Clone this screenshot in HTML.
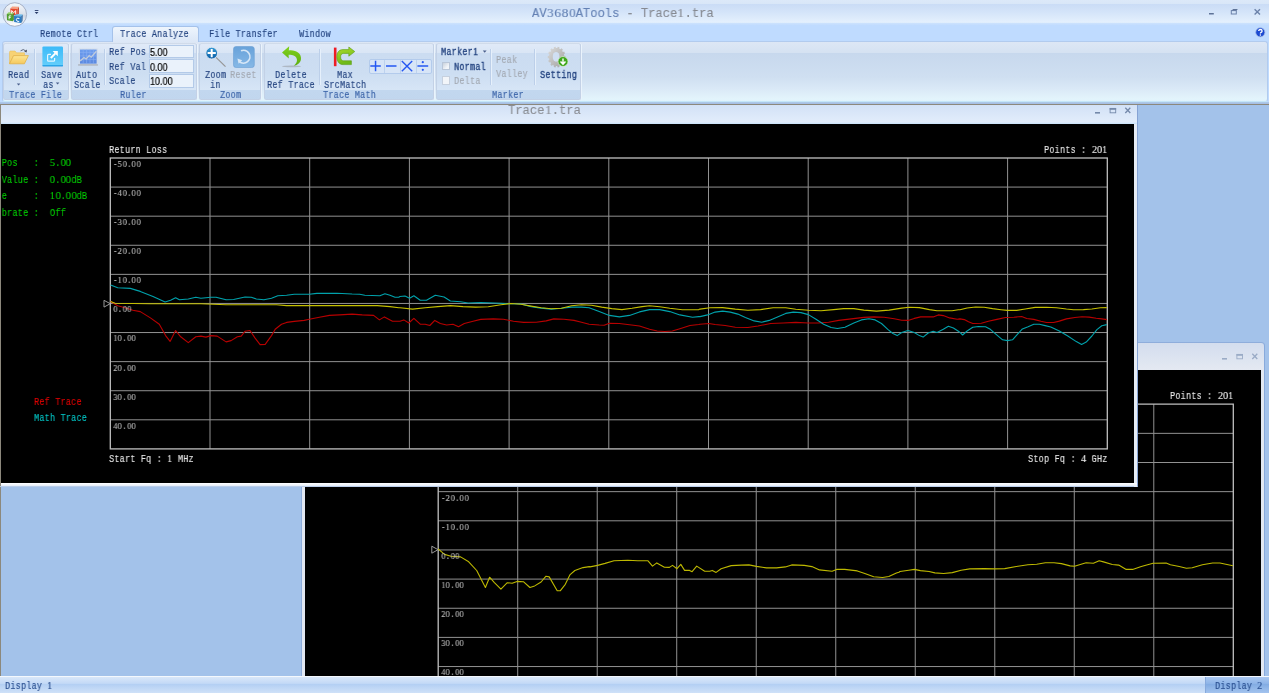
<!DOCTYPE html><html><head><meta charset="utf-8"><title>AV3680ATools</title><style>*{margin:0;padding:0;box-sizing:border-box}
html,body{width:1269px;height:693px;overflow:hidden;background:#a3c2ea}
div,span,svg{position:absolute}
.x{white-space:pre;line-height:1;transform-origin:0 0;display:block;will-change:transform}
.m{font-family:"Liberation Mono",sans-serif;font-size:10.5px;font-weight:normal;transform:scaleX(0.8397)}
.m b{transform:scaleX(1.1909)}
.mb{font-family:"Liberation Mono",sans-serif;font-size:10.5px;font-weight:normal;transform:scaleX(0.8397)}
.mb b{transform:scaleX(1.1909)}
.s{font-family:"Liberation Mono",sans-serif;font-size:8.9px;font-weight:normal;transform:scaleX(0.8689)}
.s b{transform:scaleX(1.0703);font-size:10.5px;width:5.340px}
.t{font-family:"Liberation Mono",sans-serif;font-size:13.2px;font-weight:normal;transform:scaleX(0.9205)}
.t b{transform:scaleX(1.0864)}
.e{font-family:"Liberation Sans",sans-serif;font-size:10.0px;font-weight:normal;transform:scaleX(0.9000)}
.x b{display:inline-block;width:0.6em;text-align:center;font-family:"Liberation Serif",serif;font-weight:normal;line-height:0;font-size:1.02em;width:0.5882em}
.m,.s,.t{-webkit-text-stroke:0.12px currentColor}
.mb{-webkit-text-stroke:0.3px currentColor}
.k{-webkit-text-stroke:0.1px currentColor}</style></head><body>
<div style="left:0px;top:104px;width:1269px;height:573px;background:#a3c2ea"></div>
<div style="left:0px;top:104px;width:1.4px;height:573px;background:#8c887c"></div>
<div id="w2" style="left:300.6px;top:341.8px;width:964.6px;height:340px;background:linear-gradient(#d3ddee,#e4e9f2 27px,#e2e8f2 28px);border-radius:4px 4px 0 0;border:1px solid #8eaddb;border-right:1.5px solid #88aadc"></div>
<div style="left:304.5px;top:369.6px;width:956px;height:306.4px;background:#000"></div>
<svg style="left:1220.5px;top:352.7px" width="45" height="10" viewBox="0 0 45 10"><rect x="1" y="5" width="5" height="1.6" fill="#9aabc6"/><rect x="15.9" y="1.4" width="5.6" height="4.4" fill="none" stroke="#9aabc6" stroke-width="0.9"/><rect x="15.5" y="1" width="6.4" height="1.8" fill="#9aabc6"/><path d="M31.3 0.8 l5 5.2 M36.3 0.8 l-5 5.2" stroke="#9aabc6" stroke-width="1.3" fill="none"/></svg>
<svg style="left:0;top:0" width="1269" height="693" viewBox="0 0 1269 693" shape-rendering="geometricPrecision"><line x1="517.71" y1="404.2" x2="517.71" y2="676.00" stroke="#929292" stroke-width="1"/><line x1="597.22" y1="404.2" x2="597.22" y2="676.00" stroke="#929292" stroke-width="1"/><line x1="676.73" y1="404.2" x2="676.73" y2="676.00" stroke="#929292" stroke-width="1"/><line x1="756.24" y1="404.2" x2="756.24" y2="676.00" stroke="#929292" stroke-width="1"/><line x1="835.75" y1="404.2" x2="835.75" y2="676.00" stroke="#929292" stroke-width="1"/><line x1="915.26" y1="404.2" x2="915.26" y2="676.00" stroke="#929292" stroke-width="1"/><line x1="994.77" y1="404.2" x2="994.77" y2="676.00" stroke="#929292" stroke-width="1"/><line x1="1074.28" y1="404.2" x2="1074.28" y2="676.00" stroke="#929292" stroke-width="1"/><line x1="1153.79" y1="404.2" x2="1153.79" y2="676.00" stroke="#929292" stroke-width="1"/><line x1="438.2" y1="433.35" x2="1233.3" y2="433.35" stroke="#929292" stroke-width="1"/><line x1="438.2" y1="462.50" x2="1233.3" y2="462.50" stroke="#929292" stroke-width="1"/><line x1="438.2" y1="491.65" x2="1233.3" y2="491.65" stroke="#929292" stroke-width="1"/><line x1="438.2" y1="520.80" x2="1233.3" y2="520.80" stroke="#929292" stroke-width="1"/><line x1="438.2" y1="549.95" x2="1233.3" y2="549.95" stroke="#929292" stroke-width="1"/><line x1="438.2" y1="579.10" x2="1233.3" y2="579.10" stroke="#929292" stroke-width="1"/><line x1="438.2" y1="608.25" x2="1233.3" y2="608.25" stroke="#929292" stroke-width="1"/><line x1="438.2" y1="637.40" x2="1233.3" y2="637.40" stroke="#929292" stroke-width="1"/><line x1="438.2" y1="666.55" x2="1233.3" y2="666.55" stroke="#929292" stroke-width="1"/><path d="M438.2 676 V404.2 H1233.3 V676" fill="none" stroke="#c0c0c0" stroke-width="1.3"/><polyline fill="none" stroke="#bdb800" stroke-width="1.1" stroke-linejoin="round" points="438.1,548.9 444.5,554.4 451.0,556.3 460.6,556.9 468.7,561.8 476.7,570.5 485.4,587.5 489.6,577.2 494.4,582.7 500.9,589.1 507.3,582.7 512.2,583.3 517.0,581.4 523.4,581.7 529.9,587.5 534.7,585.9 541.1,582.0 546.0,576.2 549.2,576.9 557.2,590.7 560.4,590.7 565.3,584.3 570.1,574.6 574.9,570.5 583.0,567.6 589.4,566.6 590.0,566.9 597.6,565.4 605.1,563.4 614.0,560.8 627.8,560.3 637.9,560.8 648.0,560.8 652.5,566.1 656.8,562.9 664.4,567.2 669.4,567.4 672.5,565.4 677.0,568.7 680.8,564.4 684.6,570.4 689.6,570.4 692.1,571.7 696.7,566.1 704.7,571.2 709.8,571.2 712.3,570.4 716.1,572.4 721.1,568.7 731.2,565.6 741.3,565.1 748.9,564.9 756.4,566.4 766.5,567.9 776.6,567.9 785.4,566.9 791.7,564.9 804.3,565.4 811.9,566.6 819.5,569.9 832.1,571.2 836.6,569.4 844.7,569.4 857.3,570.9 864.8,573.5 873.7,576.7 882.5,577.5 888.8,576.5 896.4,573.0 898.9,572.2 900.0,571.5 908.7,570.3 914.5,569.4 920.4,570.6 929.1,571.5 934.9,572.9 943.6,573.5 952.3,572.6 961.1,570.3 969.8,568.9 984.3,568.6 994.5,568.9 1004.7,568.6 1016.3,566.5 1027.9,564.8 1036.7,564.2 1045.4,562.7 1054.1,562.7 1061.4,563.6 1070.1,565.9 1074.5,566.2 1080.3,564.5 1086.1,562.7 1093.4,563.3 1099.2,560.7 1103.5,561.9 1112.3,564.5 1118.7,565.1 1126.2,569.4 1132.6,569.4 1141.3,566.5 1153.0,563.3 1166.1,563.0 1170.4,564.8 1179.2,566.5 1186.4,568.3 1192.2,567.7 1202.4,564.8 1212.6,563.0 1219.9,563.0 1232.9,565.7"/><path d="M431.8 546.2 L438 549.7 L431.8 553.2 Z" fill="none" stroke="#9a9a9a" stroke-width="1"/></svg>
<span class="x s" style="left:440.88px;top:495px;color:#b8b8b8;">-<b>2</b><b>0</b>.<b>0</b><b>0</b></span>
<span class="x s" style="left:440.88px;top:524px;color:#b8b8b8;">-<b>1</b><b>0</b>.<b>0</b><b>0</b></span>
<span class="x s" style="left:440.88px;top:553px;color:#b8b8b8;"><b>0</b>.<b>0</b><b>0</b></span>
<span class="x s" style="left:440.88px;top:582px;color:#b8b8b8;"><b>1</b><b>0</b>.<b>0</b><b>0</b></span>
<span class="x s" style="left:440.88px;top:611px;color:#b8b8b8;"><b>2</b><b>0</b>.<b>0</b><b>0</b></span>
<span class="x s" style="left:440.88px;top:640px;color:#b8b8b8;"><b>3</b><b>0</b>.<b>0</b><b>0</b></span>
<span class="x s" style="left:440.88px;top:669px;color:#b8b8b8;"><b>4</b><b>0</b>.<b>0</b><b>0</b></span>
<span class="x m k" style="left:1170.09px;top:391px;color:#e8e8e8;">Points : <b>2</b><b>0</b><b>1</b></span>
<div id="w1" style="left:0;top:104px;width:1138px;height:383px;background:linear-gradient(#d2e1f6,#e2edfb 17px,#cfe6fb 18.5px,#cfe6fb 19.5px,#e8eef6 19.5px);border-top:1px solid #8c887c;border-right:1px solid #86a3d4;border-bottom:1px solid #b9cdea"></div>
<div style="left:1133.8px;top:124px;width:3.2px;height:362.5px;background:#e6ecf5"></div>
<div style="left:0px;top:482.6px;width:1137px;height:3.9px;background:linear-gradient(#fff,#e4ecf8)"></div>
<div style="left:0px;top:105px;width:1.4px;height:381px;background:#8c887c"></div>
<div style="left:1.4px;top:123.8px;width:1132.4px;height:358.8px;background:#000"></div>
<span class="x t" style="left:508.43px;top:104px;color:#8a8d93;">Trace<b>1</b>.tra</span>
<svg style="left:1094px;top:107.1px" width="45" height="10" viewBox="0 0 45 10"><rect x="1" y="5" width="5" height="1.6" fill="#7489aa"/><rect x="16.100000000000044" y="1.4" width="5.6" height="4.4" fill="none" stroke="#7489aa" stroke-width="0.9"/><rect x="15.700000000000045" y="1" width="6.4" height="1.8" fill="#7489aa"/><path d="M31.3 0.8 l5 5.2 M36.3 0.8 l-5 5.2" stroke="#7489aa" stroke-width="1.3" fill="none"/></svg>
<svg style="left:0;top:0" width="1269" height="693" viewBox="0 0 1269 693" shape-rendering="geometricPrecision"><line x1="210.00" y1="158" x2="210.00" y2="448.90" stroke="#929292" stroke-width="1"/><line x1="309.70" y1="158" x2="309.70" y2="448.90" stroke="#929292" stroke-width="1"/><line x1="409.40" y1="158" x2="409.40" y2="448.90" stroke="#929292" stroke-width="1"/><line x1="509.10" y1="158" x2="509.10" y2="448.90" stroke="#929292" stroke-width="1"/><line x1="608.80" y1="158" x2="608.80" y2="448.90" stroke="#929292" stroke-width="1"/><line x1="708.50" y1="158" x2="708.50" y2="448.90" stroke="#929292" stroke-width="1"/><line x1="808.20" y1="158" x2="808.20" y2="448.90" stroke="#929292" stroke-width="1"/><line x1="907.90" y1="158" x2="907.90" y2="448.90" stroke="#929292" stroke-width="1"/><line x1="1007.60" y1="158" x2="1007.60" y2="448.90" stroke="#929292" stroke-width="1"/><line x1="110.3" y1="187.09" x2="1107.3" y2="187.09" stroke="#929292" stroke-width="1"/><line x1="110.3" y1="216.18" x2="1107.3" y2="216.18" stroke="#929292" stroke-width="1"/><line x1="110.3" y1="245.27" x2="1107.3" y2="245.27" stroke="#929292" stroke-width="1"/><line x1="110.3" y1="274.36" x2="1107.3" y2="274.36" stroke="#929292" stroke-width="1"/><line x1="110.3" y1="303.45" x2="1107.3" y2="303.45" stroke="#929292" stroke-width="1"/><line x1="110.3" y1="332.54" x2="1107.3" y2="332.54" stroke="#929292" stroke-width="1"/><line x1="110.3" y1="361.63" x2="1107.3" y2="361.63" stroke="#929292" stroke-width="1"/><line x1="110.3" y1="390.72" x2="1107.3" y2="390.72" stroke="#929292" stroke-width="1"/><line x1="110.3" y1="419.81" x2="1107.3" y2="419.81" stroke="#929292" stroke-width="1"/><rect x="110.3" y="158" width="997" height="290.9" fill="none" stroke="#c0c0c0" stroke-width="1.3"/><polyline fill="none" stroke="#b80000" stroke-width="1.1" stroke-linejoin="round" points="110.6,301.5 117.7,305.8 125.2,307.8 132.8,310.3 140.3,311.6 150.4,317.9 159.3,324.2 165.6,335.6 170.1,341.4 175.6,330.5 180.7,336.8 188.3,342.6 195.8,336.8 200.9,336.1 205.9,337.1 210.9,335.6 217.2,336.1 226.1,341.9 231.1,340.6 237.4,336.8 241.2,336.1 245.0,331.3 250.0,330.5 255.1,338.1 260.1,344.6 265.2,344.4 271.5,335.6 275.2,329.3 281.5,324.2 286.6,322.4 294.2,321.4 304.2,320.4 309.3,319.2 319.4,317.2 329.5,315.4 339.5,314.9 352.1,314.1 362.2,314.9 373.6,315.4 379.4,319.9 384.4,316.9 392.5,321.2 398.8,321.2 400.0,321.2 403.8,319.9 408.8,323.0 413.9,318.4 420.2,324.2 425.2,324.2 429.8,325.5 434.8,320.4 440.3,323.5 446.6,325.0 453.0,324.2 458.5,326.7 464.3,323.5 473.1,321.2 480.7,319.4 493.3,318.9 503.4,319.2 513.5,321.2 523.6,322.4 536.2,322.2 546.2,320.9 553.8,318.9 563.9,319.2 574.0,320.4 581.5,322.2 589.1,324.2 599.2,325.0 604.2,325.2 609.3,323.2 619.4,323.5 629.5,324.7 639.5,326.0 649.6,329.3 657.2,331.0 664.8,331.5 672.3,331.0 679.9,328.7 690.0,325.5 698.8,324.5 700.0,324.2 708.8,323.5 715.1,324.5 725.2,325.5 735.3,327.2 747.9,327.5 758.0,326.0 770.6,323.5 783.2,323.0 795.8,322.4 808.4,323.0 818.5,323.0 828.6,322.2 838.7,320.4 851.3,318.9 863.9,317.4 874.0,316.9 884.1,317.2 894.2,318.7 901.7,320.2 908.0,320.4 914.3,318.4 920.6,316.9 926.9,316.9 933.2,316.9 938.3,314.9 943.3,315.6 949.6,317.9 957.2,319.2 960.0,318.9 964.3,319.6 968.5,321.8 972.8,323.5 981.3,323.2 988.4,321.3 996.9,319.4 1005.4,317.5 1013.9,317.2 1021.7,316.5 1026.7,318.5 1033.8,319.4 1040.9,321.3 1046.5,322.5 1053.6,322.5 1059.3,321.1 1066.4,318.9 1074.9,317.5 1082.0,316.8 1089.1,317.1 1096.2,318.2 1101.8,318.9 1106.8,319.6"/><polyline fill="none" stroke="#00a2ac" stroke-width="1.1" stroke-linejoin="round" points="110.6,285.1 117.7,287.7 130.3,288.4 140.3,291.4 153.0,296.5 165.1,302.0 170.6,300.3 175.6,297.7 179.4,299.8 188.3,299.0 195.8,297.2 200.9,298.2 210.9,297.2 216.0,297.2 226.1,299.8 233.6,299.5 245.0,297.0 251.3,297.2 256.3,299.0 263.9,299.8 271.5,298.2 277.8,295.7 286.6,295.2 294.2,294.2 309.3,294.2 316.8,293.4 337.0,293.2 352.1,294.0 359.7,294.2 364.8,295.2 379.9,295.7 384.9,293.7 390.0,295.2 395.0,297.2 398.8,297.2 400.0,296.5 405.0,296.0 409.6,298.2 413.9,295.7 420.2,300.3 426.5,300.3 435.3,295.2 444.1,297.0 450.4,301.0 460.5,301.8 468.1,303.0 480.7,302.5 500.9,303.3 510.9,303.8 521.0,304.0 531.1,306.6 541.2,308.1 551.3,309.1 561.4,308.3 571.5,307.1 581.5,307.1 589.1,307.8 599.2,311.6 609.3,315.4 619.4,316.9 629.5,315.4 639.5,311.9 649.6,309.6 659.7,309.6 669.8,311.6 679.9,314.9 692.5,317.2 698.8,316.6 700.0,316.6 707.6,314.9 715.1,312.1 722.7,311.1 730.3,312.1 737.8,314.1 745.4,317.4 754.2,320.9 761.8,322.2 769.3,320.4 776.9,317.2 785.7,313.4 793.3,312.1 800.9,312.6 808.4,314.6 816.0,319.2 823.6,324.2 831.1,327.5 837.4,328.5 845.0,327.2 853.8,323.0 861.4,319.9 868.9,318.7 875.2,319.9 881.5,323.5 887.8,329.3 892.9,333.5 897.2,335.6 901.7,332.5 908.0,330.5 914.3,332.5 919.4,335.6 923.1,337.1 928.2,333.0 933.2,331.3 937.0,332.5 943.3,329.3 948.4,326.2 953.4,328.0 958.4,331.3 960.0,332.4 962.6,335.0 967.1,331.0 972.8,327.2 978.4,326.5 985.5,326.7 989.8,328.9 995.5,333.8 1002.6,339.8 1007.5,340.6 1012.5,339.8 1016.7,335.2 1022.4,328.9 1028.1,326.7 1033.8,324.3 1039.4,324.3 1045.1,325.6 1050.8,327.0 1059.3,331.0 1067.8,336.0 1076.3,341.6 1081.6,344.5 1086.2,342.1 1091.9,336.0 1096.9,329.6 1101.8,325.7 1106.8,324.6"/><polyline fill="none" stroke="#c4be00" stroke-width="1.1" stroke-linejoin="round" points="110.6,301.5 115.1,303.3 150.4,303.8 200.9,303.8 226.1,304.8 276.5,304.8 286.6,305.6 377.4,305.6 390.0,306.6 398.8,307.8 400.0,307.8 412.6,309.1 425.2,307.8 437.8,306.6 450.4,305.6 463.0,306.6 475.6,307.1 488.3,306.8 500.9,304.8 510.9,303.5 521.0,304.3 531.1,306.1 541.2,307.8 551.3,308.8 561.4,308.3 571.5,305.8 581.5,304.8 591.6,305.3 601.7,307.1 611.8,308.6 621.9,309.6 632.0,308.3 642.1,306.6 649.6,305.8 659.7,306.8 669.8,308.3 682.4,309.8 695.0,309.8 698.8,309.6 700.0,309.1 710.1,307.8 722.7,307.6 735.3,309.1 747.9,310.3 760.5,309.6 773.1,307.8 785.7,307.8 795.8,309.3 808.4,310.3 821.0,310.8 833.6,309.6 843.7,308.6 853.8,308.6 863.9,310.1 876.5,311.1 889.1,310.1 901.7,308.1 909.3,307.3 919.4,307.6 929.5,309.6 937.0,310.8 952.1,310.8 958.4,309.8 960.0,309.7 967.1,308.0 975.6,307.0 984.1,307.2 992.6,308.6 1001.1,309.7 1007.5,310.4 1016.7,310.4 1025.2,309.0 1035.2,307.4 1046.5,307.2 1056.5,307.7 1066.4,309.0 1073.5,309.7 1083.4,309.6 1091.9,309.0 1100.4,307.7 1106.8,307.6"/><path d="M104 300.3 L110.2 303.7 L104 307.1 Z" fill="none" stroke="#9a9a9a" stroke-width="1"/></svg>
<span class="x s" style="left:112.88px;top:161px;color:#b8b8b8;">-<b>5</b><b>0</b>.<b>0</b><b>0</b></span>
<span class="x s" style="left:112.88px;top:190px;color:#b8b8b8;">-<b>4</b><b>0</b>.<b>0</b><b>0</b></span>
<span class="x s" style="left:112.88px;top:219px;color:#b8b8b8;">-<b>3</b><b>0</b>.<b>0</b><b>0</b></span>
<span class="x s" style="left:112.88px;top:248px;color:#b8b8b8;">-<b>2</b><b>0</b>.<b>0</b><b>0</b></span>
<span class="x s" style="left:112.88px;top:277px;color:#b8b8b8;">-<b>1</b><b>0</b>.<b>0</b><b>0</b></span>
<span class="x s" style="left:112.88px;top:306px;color:#b8b8b8;"><b>0</b>.<b>0</b><b>0</b></span>
<span class="x s" style="left:112.88px;top:335px;color:#b8b8b8;"><b>1</b><b>0</b>.<b>0</b><b>0</b></span>
<span class="x s" style="left:112.88px;top:365px;color:#b8b8b8;"><b>2</b><b>0</b>.<b>0</b><b>0</b></span>
<span class="x s" style="left:112.88px;top:394px;color:#b8b8b8;"><b>3</b><b>0</b>.<b>0</b><b>0</b></span>
<span class="x s" style="left:112.88px;top:423px;color:#b8b8b8;"><b>4</b><b>0</b>.<b>0</b><b>0</b></span>
<span class="x m k" style="left:108.99px;top:145px;color:#e8e8e8;">Return Loss</span>
<span class="x m k" style="left:1044.49px;top:145px;color:#e8e8e8;">Points : <b>2</b><b>0</b><b>1</b></span>
<span class="x m k" style="left:108.99px;top:454px;color:#e8e8e8;">Start Fq : <b>1</b> MHz</span>
<span class="x m k" style="left:1027.79px;top:454px;color:#e8e8e8;">Stop Fq : <b>4</b> GHz</span>
<div style="left:1.8px;top:150px;width:108px;height:80px;overflow:hidden">
<span class="x m k" style="left:-22.13px;top:8px;color:#00cc00;letter-spacing:0.107px">Ref Pos   :  <b>5</b>.<b>0</b><b>0</b></span>
<span class="x m k" style="left:-22.13px;top:25px;color:#00cc00;letter-spacing:0.107px">Ref Value :  <b>0</b>.<b>0</b><b>0</b>dB</span>
<span class="x m k" style="left:-22.13px;top:41px;color:#00cc00;letter-spacing:0.107px">Scale     :  <b>1</b><b>0</b>.<b>0</b><b>0</b>dB</span>
<span class="x m k" style="left:-22.13px;top:58px;color:#00cc00;letter-spacing:0.107px">Calibrate :  Off</span>
</div>
<span class="x m k" style="left:33.69px;top:397px;color:#e00000;">Ref Trace</span>
<span class="x m k" style="left:33.69px;top:413px;color:#00c4c4;">Math Trace</span>
<div style="left:0px;top:676px;width:1269px;height:1.2px;background:#f4f8fd"></div>
<div style="left:0px;top:677.2px;width:1269px;height:16px;background:linear-gradient(#d9e7f9,#c3d9f6 40%,#b3cff3 45%,#cfe1f8)"></div>
<div style="left:1205.3px;top:677.2px;width:64px;height:16px;background:linear-gradient(#a9c7f0,#8fb5e8 40%,#82ace3 45%,#a3c3ee);border-left:1px solid #86a9dc"></div>
<span class="x m" style="left:5.29px;top:681px;color:#2a4f90;">Display <b>1</b></span>
<span class="x m" style="left:1214.89px;top:681px;color:#2a4f90;">Display <b>2</b></span>
<div style="left:0px;top:0px;width:1269px;height:23.3px;background:linear-gradient(#dce9f9 0,#d9e7f8 3.6px,#cadcf6 4.2px,#d4e4f9 12px,#e4f0fd 22.3px,#cfe3fc 23.3px)"></div>
<div style="left:0px;top:23.3px;width:1269px;height:79.2px;background:linear-gradient(#cde2fd,#bfdbff 2.6px)"></div>
<svg style="left:0;top:0" width="32" height="32" viewBox="0 0 32 32"><defs><linearGradient id="ab" x1="0" y1="0" x2="0" y2="1"><stop offset="0" stop-color="#f4f7fb"/><stop offset="0.45" stop-color="#dde3ec"/><stop offset="0.55" stop-color="#cfd6e2"/><stop offset="0.8" stop-color="#eef1f6"/><stop offset="1" stop-color="#ffffff"/></linearGradient><linearGradient id="abr" x1="0" y1="0" x2="0" y2="1"><stop offset="0" stop-color="#f79a78"/><stop offset="1" stop-color="#ef6a48"/></linearGradient></defs><circle cx="14.8" cy="14.5" r="11.8" fill="url(#ab)" stroke="#a4b0c6" stroke-width="1"/><path d="M10.3 8.6 L12.2 6.6 L19 6.8 L17.6 8.9 Z" fill="#f8a282"/><path d="M10.3 8.6 L17.6 8.9 L17.4 15.6 L10.6 14.8 Z" fill="#e8472b"/><path d="M17.6 8.9 L19 6.8 L18.8 13.6 L17.4 15.6 Z" fill="#c23a22"/><path d="M6.8 14 L8.6 12.2 L13.9 12.6 L13.2 14.6 Z" fill="#93cf68"/><path d="M6.8 14 L13.2 14.6 L13 21.2 L7 20.2 Z" fill="#4f9e2e"/><path d="M13.2 14.6 L13.9 12.6 L13.8 19.4 L13 21.2 Z" fill="#3c7c22"/><path d="M14 16 L15.8 14.2 L22.7 14.6 L21.4 16.6 Z" fill="#6abaea"/><path d="M14 16 L21.4 16.6 L21.2 23 L14.2 22 Z" fill="#2a7cc4"/><path d="M21.4 16.6 L22.7 14.6 L22.5 21 L21.2 23 Z" fill="#1c5c9c"/><path d="M11.7 13.5 V10.5 L13.7 12.6 L15.7 10.7 V13.9" fill="none" stroke="#fff" stroke-width="1"/><path d="M9.1 19.3 V15.9 H11.2 M9.1 17.5 H10.7" fill="none" stroke="#fff" stroke-width="0.9"/><path d="M19.4 18.5 Q16.5 17.2 16.3 19.7 Q16.5 21.8 19.2 21.5" fill="none" stroke="#fff" stroke-width="1"/></svg>
<svg style="left:33px;top:9px" width="8" height="7" viewBox="0 0 8 7"><rect x="1.8" y="1" width="3.6" height="1" fill="#3a4c78"/><path d="M1.7 2.9 H5.5 L3.6 5 Z" fill="#2a3c68"/></svg>
<span class="x t" style="left:531.73px;top:7px;color:#6481b4;">AV<b>3</b><b>6</b><b>8</b><b>0</b>ATools</span>
<span class="x t" style="left:619.21px;top:7px;color:#868a92;"> - Trace<b>1</b>.tra</span>
<svg style="left:1205px;top:6px" width="60" height="12" viewBox="0 0 60 12"><rect x="4" y="7" width="4.8" height="1.5" fill="#5e7397"/><rect x="26.3" y="4.6" width="5" height="3.4" fill="none" stroke="#6b82aa" stroke-width="1"/><path d="M26.5 4.4 L28.2 3 H33 L31.4 4.4 Z" fill="#5e7397"/><path d="M49.6 3.2 l5.4 5.2 M55 3.2 l-5.4 5.2" stroke="#6b82aa" stroke-width="1.4"/></svg>
<svg style="left:1255px;top:27px" width="11" height="11" viewBox="0 0 11 11"><circle cx="5.3" cy="5.3" r="4.6" fill="#1b49d2" stroke="#a9bfe6" stroke-width="0.8"/><path d="M3.7 4.1 Q3.7 2.5 5.4 2.5 Q7.1 2.5 7.1 3.9 Q7.1 4.8 6.1 5.3 Q5.4 5.7 5.4 6.4" fill="none" stroke="#fff" stroke-width="1.3"/><circle cx="5.4" cy="8" r="0.75" fill="#fff"/></svg>
<div style="left:1.5px;top:41.4px;width:1266px;height:61px;border-radius:3px;border:1px solid #b2cbee;border-bottom-color:#c4e6f8;background:linear-gradient(#dde7f5 0,#d5e2f2 10.5px,#c7d8ed 11px,#cfdff1 35px,#dbeaf7 48px,#e3f4fc 57px,#dcf1fb 61px)"></div>
<div style="left:0px;top:102.3px;width:1269px;height:1.8px;background:linear-gradient(#b4d3ef,#a7c0e4 0.8px)"></div>
<div style="left:0px;top:104px;width:1269px;height:1px;background:#8c887c"></div>
<div style="left:111.5px;top:25.6px;width:87px;height:16.6px;border:1px solid #a5c2ea;border-bottom:none;border-radius:3px 3px 0 0;background:linear-gradient(#eef5fd,#e2ecf9 60%,#dce7f6)"></div>
<span class="x m" style="left:40.09px;top:29px;color:#22427f;">Remote Ctrl</span>
<span class="x m" style="left:120.09px;top:29px;color:#22427f;">Trace Analyze</span>
<span class="x m" style="left:209.29px;top:29px;color:#22427f;">File Transfer</span>
<span class="x m" style="left:298.79px;top:29px;color:#22427f;">Window</span>
<div style="left:3px;top:43.3px;width:65.6px;height:57.2px;border-radius:2.5px;border:1px solid #c3d1e6;border-top-color:#d0dbea;background:linear-gradient(#e0eaf8 0,#d9e5f5 9px,#cbdcf1 9.5px,#cddef2 30px,#d6e5f6 45.5px,#c2d7ef 46px,#c1d6ee 57px);box-shadow:1px 0 0 #eaf3fc"></div>
<span class="x m" style="left:9.09px;top:90px;color:#3a63a8;">Trace File</span>
<div style="left:70.6px;top:43.3px;width:126.0px;height:57.2px;border-radius:2.5px;border:1px solid #c3d1e6;border-top-color:#d0dbea;background:linear-gradient(#e0eaf8 0,#d9e5f5 9px,#cbdcf1 9.5px,#cddef2 30px,#d6e5f6 45.5px,#c2d7ef 46px,#c1d6ee 57px);box-shadow:1px 0 0 #eaf3fc"></div>
<span class="x m" style="left:120.09px;top:90px;color:#3a63a8;">Ruler</span>
<div style="left:199.2px;top:43.3px;width:62.19999999999999px;height:57.2px;border-radius:2.5px;border:1px solid #c3d1e6;border-top-color:#d0dbea;background:linear-gradient(#e0eaf8 0,#d9e5f5 9px,#cbdcf1 9.5px,#cddef2 30px,#d6e5f6 45.5px,#c2d7ef 46px,#c1d6ee 57px);box-shadow:1px 0 0 #eaf3fc"></div>
<span class="x m" style="left:219.89px;top:90px;color:#3a63a8;">Zoom</span>
<div style="left:263.8px;top:43.3px;width:169.8px;height:57.2px;border-radius:2.5px;border:1px solid #c3d1e6;border-top-color:#d0dbea;background:linear-gradient(#e0eaf8 0,#d9e5f5 9px,#cbdcf1 9.5px,#cddef2 30px,#d6e5f6 45.5px,#c2d7ef 46px,#c1d6ee 57px);box-shadow:1px 0 0 #eaf3fc"></div>
<span class="x m" style="left:322.69px;top:90px;color:#3a63a8;">Trace Math</span>
<div style="left:436.4px;top:43.3px;width:144.20000000000005px;height:57.2px;border-radius:2.5px;border:1px solid #c3d1e6;border-top-color:#d0dbea;background:linear-gradient(#e0eaf8 0,#d9e5f5 9px,#cbdcf1 9.5px,#cddef2 30px,#d6e5f6 45.5px,#c2d7ef 46px,#c1d6ee 57px);box-shadow:1px 0 0 #eaf3fc"></div>
<span class="x m" style="left:492.29px;top:90px;color:#3a63a8;">Marker</span>
<svg style="left:8px;top:46px" width="24" height="20" viewBox="0 0 24 20"><defs><linearGradient id="fo" x1="0" y1="0" x2="0" y2="1"><stop offset="0" stop-color="#fde694"/><stop offset="1" stop-color="#f5c85c"/></linearGradient></defs><path d="M1.5 17.5 V6.2 Q1.5 5 2.7 5 H7 L8.6 6.8 H16.5 V9.5 H5.5 Z" fill="#f7d274" stroke="#e6b850" stroke-width="0.5"/><path d="M1.5 17.8 L5.6 9.6 H20.4 L16.4 17.8 Z" fill="url(#fo)" stroke="#e3ad3c" stroke-width="0.7"/><path d="M12.6 4.8 Q15.4 2.2 17.8 5" fill="none" stroke="#555e70" stroke-width="0.9"/><path d="M19 3.6 L18.6 6.6 L16.2 5.6 Z" fill="#4a5262"/></svg>
<span class="x m" style="left:7.79px;top:70px;color:#22427f;">Read</span>
<svg style="left:16px;top:82.6px" width="6" height="4" viewBox="0 0 6 4"><path d="M0.8 0.6 H4.4 L2.6 2.6 Z" fill="#4a5f8c"/></svg>
<div style="left:33.8px;top:48.5px;width:1px;height:36.0px;background:#bccfe9"></div>
<div style="left:34.8px;top:48.5px;width:1px;height:36.0px;background:#e6f0fb"></div>
<svg style="left:41.5px;top:46px" width="22" height="22" viewBox="0 0 22 22"><defs><linearGradient id="sa" x1="0" y1="0" x2="0" y2="1"><stop offset="0" stop-color="#3cbaf8"/><stop offset="0.9" stop-color="#62cdfb"/><stop offset="0.93" stop-color="#2aa6ea"/><stop offset="1" stop-color="#2aa0e4"/></linearGradient></defs><rect x="0.4" y="0.4" width="20.6" height="20.2" rx="1.2" fill="url(#sa)"/><path d="M9 8.4 H6.6 Q5.6 8.4 5.6 9.4 V14.2 Q5.6 15.2 6.6 15.2 H11.6 Q12.6 15.2 12.6 14.2 V12" fill="none" stroke="#e4f6ff" stroke-width="1.2"/><path d="M8.8 12 L13.4 7.4" stroke="#fff" stroke-width="2"/><path d="M10.6 5 H15.8 V10.2 Z" fill="#fff"/></svg>
<span class="x m" style="left:41.49px;top:70px;color:#22427f;">Save</span>
<span class="x m" style="left:43.19px;top:80px;color:#22427f;">as</span>
<svg style="left:55.4px;top:82px" width="6" height="4" viewBox="0 0 6 4"><path d="M0.8 0.6 H4.4 L2.6 2.6 Z" fill="#4a5f8c"/></svg>
<svg style="left:76.9px;top:46.6px" width="22" height="19" viewBox="0 0 22 19"><defs><linearGradient id="ch" x1="0" y1="0" x2="0" y2="1"><stop offset="0" stop-color="#6e9eee"/><stop offset="1" stop-color="#5a88e0"/></linearGradient></defs><rect x="2.4" y="2" width="17.8" height="15.2" fill="url(#ch)" stroke="#d6dfec" stroke-width="1.1"/><path d="M3 5.4 H19.6 M3 8.9 H19.6 M3 12.4 H19.6 M6.2 2.6 V16.6 M9.6 2.6 V16.6 M13 2.6 V16.6 M16.4 2.6 V16.6" stroke="#8ab0f4" stroke-width="0.6"/><path d="M3.2 14 L7 10.6 L9.2 12 L12.2 8.6 L14.2 10.2 L19.4 4.2" fill="none" stroke="#c2ccda" stroke-width="1.3"/><rect x="1.1" y="17.4" width="19.8" height="1.1" fill="#a4a8ae"/></svg>
<span class="x m" style="left:76.49px;top:70px;color:#22427f;">Auto</span>
<span class="x m" style="left:74.09px;top:80px;color:#22427f;">Scale</span>
<div style="left:103.9px;top:48.5px;width:1px;height:36.0px;background:#bccfe9"></div>
<div style="left:104.9px;top:48.5px;width:1px;height:36.0px;background:#e6f0fb"></div>
<span class="x m" style="left:109.29px;top:47px;color:#22427f;">Ref Pos</span>
<span class="x m" style="left:109.29px;top:62px;color:#22427f;">Ref Val</span>
<span class="x m" style="left:109.29px;top:76px;color:#22427f;">Scale</span>
<div style="left:148.5px;top:44.7px;width:45.8px;height:13.8px;background:#eaf2fb;border:1px solid #b3cae8"></div>
<span class="x e" style="left:149.68px;top:48px;color:#000;-webkit-text-stroke:0.2px #000">5.00</span>
<div style="left:148.5px;top:59.300000000000004px;width:45.8px;height:13.8px;background:#eaf2fb;border:1px solid #b3cae8"></div>
<span class="x e" style="left:149.68px;top:63px;color:#000;-webkit-text-stroke:0.2px #000">0.00</span>
<div style="left:148.5px;top:73.9px;width:45.8px;height:13.8px;background:#eaf2fb;border:1px solid #b3cae8"></div>
<span class="x e" style="left:149.68px;top:77px;color:#000;-webkit-text-stroke:0.2px #000">10.00</span>
<svg style="left:203px;top:45px" width="26" height="24" viewBox="0 0 26 24"><defs><linearGradient id="zg" x1="0" y1="0" x2="0" y2="1"><stop offset="0" stop-color="#3a9cd6"/><stop offset="1" stop-color="#0a5ea6"/></linearGradient></defs><path d="M13 12.4 L22.5 21.6" stroke="#959595" stroke-width="1.2"/><circle cx="8.7" cy="8.1" r="5.9" fill="url(#zg)" stroke="#dfe8f2" stroke-width="0.9"/><path d="M4.6 8.1 H12.8 M8.7 4 V12.2" stroke="#fff" stroke-width="2"/></svg>
<span class="x m" style="left:204.59px;top:70px;color:#22427f;">Zoom</span>
<span class="x m" style="left:209.89px;top:80px;color:#22427f;">in</span>
<svg style="left:232.8px;top:45.6px" width="22" height="22" viewBox="0 0 22 22"><defs><linearGradient id="rs" x1="0" y1="0" x2="0" y2="1"><stop offset="0" stop-color="#68a2da"/><stop offset="1" stop-color="#86b8e6"/></linearGradient></defs><rect x="0.5" y="0.5" width="20.8" height="21" rx="2.6" fill="url(#rs)" stroke="#6a9ed4" stroke-width="0.6"/><path d="M8 4.8 A6.4 6.4 0 1 1 6.2 15.4" fill="none" stroke="#d6e6f6" stroke-width="1.7"/><path d="M4.4 12.6 L9.2 14.2 L5.6 17.8 Z" fill="#d6e6f6"/></svg>
<span class="x m" style="left:229.99px;top:70px;color:#a3a9b2;">Reset</span>
<svg style="left:280px;top:45px" width="24" height="23" viewBox="0 0 24 23"><defs><linearGradient id="gr" x1="0" y1="0" x2="0" y2="1"><stop offset="0" stop-color="#7fd21c"/><stop offset="1" stop-color="#5fae12"/></linearGradient></defs><ellipse cx="11.5" cy="21.4" rx="9.5" ry="0.8" fill="#aeb8c4"/><path d="M2 7.4 L9.2 1.2 L8.8 5.4 C16 4.6 21.6 8.6 21 14 C20.6 18 17 20.6 13.6 20.8 C16.6 19 18 15.6 16.2 12.6 C14.6 10 11.6 9.4 8.6 9.8 L8.8 13.6 Z" fill="url(#gr)"/></svg>
<span class="x m" style="left:274.59px;top:70px;color:#22427f;">Delete</span>
<span class="x m" style="left:266.69px;top:80px;color:#22427f;">Ref Trace</span>
<div style="left:318.9px;top:48.5px;width:1px;height:36.0px;background:#bccfe9"></div>
<div style="left:319.9px;top:48.5px;width:1px;height:36.0px;background:#e6f0fb"></div>
<svg style="left:332px;top:46px" width="25" height="22" viewBox="0 0 25 22"><defs><linearGradient id="mx" x1="0" y1="0" x2="0.3" y2="1"><stop offset="0" stop-color="#aedc2c"/><stop offset="1" stop-color="#6cb818"/></linearGradient></defs><rect x="1.9" y="1.6" width="2.6" height="18.6" fill="#ee1c24"/><path d="M22.8 5.6 L16.8 1 V3.6 H11 C6.6 3.6 4.8 7 4.8 10.8 C4.8 15 7 18.6 11 18.6 H19.4 V14.8 H11.6 C9.4 14.8 8.6 13 8.6 10.8 C8.6 8.8 9.6 7.4 11.6 7.4 H16.8 V10.2 Z" fill="url(#mx)" stroke="#5c9c14" stroke-width="0.6"/></svg>
<span class="x m" style="left:337.29px;top:70px;color:#22427f;">Max</span>
<span class="x m" style="left:323.79px;top:80px;color:#22427f;">SrcMatch</span>
<div style="left:368.5px;top:59.4px;width:63.2px;height:14.2px;border:1px solid #b3cbec;border-radius:2px;background:#d7e5f7"></div>
<div style="left:384.3px;top:60.4px;width:1px;height:12.2px;background:#bdd2ee"></div>
<div style="left:400.1px;top:60.4px;width:1px;height:12.2px;background:#bdd2ee"></div>
<div style="left:415.9px;top:60.4px;width:1px;height:12.2px;background:#bdd2ee"></div>
<svg style="left:368px;top:59px" width="65" height="15" viewBox="0 0 65 15"><path d="M2.3 7 H12.8 M7.55 1.8 V12.2" stroke="#2557f2" stroke-width="1.5"/><path d="M18 7 H28.5" stroke="#2557f2" stroke-width="1.5"/><path d="M33.8 1.9 L44.2 12.2 M44.2 1.9 L33.8 12.2" stroke="#2557f2" stroke-width="1.4"/><path d="M49.4 7 H60.2" stroke="#2557f2" stroke-width="1.5"/><circle cx="54.8" cy="3.2" r="1.1" fill="#2557f2"/><circle cx="54.8" cy="10.8" r="1.1" fill="#2557f2"/></svg>
<span class="x mb" style="left:440.69px;top:47px;color:#22427f;">Marker<b>1</b></span>
<svg style="left:481.6px;top:49.5px" width="6" height="4" viewBox="0 0 6 4"><path d="M0.8 0.6 H4.6 L2.7 2.7 Z" fill="#4a5f8c"/></svg>
<div style="left:441.8px;top:62.1px;width:8px;height:7.8px;background:linear-gradient(135deg,#c9d1dc,#f2f5f9 70%);border:1px solid #b9c6d8"></div>
<span class="x mb" style="left:454.29px;top:62px;color:#22427f;">Normal</span>
<div style="left:441.6px;top:76.4px;width:8.4px;height:8.3px;background:#f2f5f9;border:1px solid #c6d0de"></div>
<span class="x m" style="left:454.09px;top:76px;color:#a3a9b2;">Delta</span>
<div style="left:489.8px;top:48.5px;width:1px;height:36.0px;background:#bccfe9"></div>
<div style="left:490.8px;top:48.5px;width:1px;height:36.0px;background:#e6f0fb"></div>
<span class="x m" style="left:495.69px;top:55px;color:#a3a9b2;">Peak</span>
<span class="x m" style="left:495.69px;top:69px;color:#a3a9b2;">Valley</span>
<div style="left:533.7px;top:48.5px;width:1px;height:36.0px;background:#bccfe9"></div>
<div style="left:534.7px;top:48.5px;width:1px;height:36.0px;background:#e6f0fb"></div>
<svg style="left:546.6px;top:45.6px" width="24" height="24" viewBox="0 0 24 24"><defs><linearGradient id="gg" x1="0" y1="0" x2="1" y2="1"><stop offset="0" stop-color="#dcdcdc"/><stop offset="1" stop-color="#a0a0a0"/></linearGradient></defs><path d="M18.46 10.05 L18.46 12.15 L17.18 12.36 L16.89 13.84 L17.96 14.69 L17.19 16.58 L15.97 16.11 L15.16 17.31 L15.82 18.61 L14.43 19.92 L13.49 18.88 L12.33 19.54 L12.44 21.05 L10.70 21.52 L10.25 20.10 L8.95 20.10 L8.50 21.52 L6.76 21.05 L6.87 19.54 L5.71 18.88 L4.77 19.92 L3.38 18.61 L4.04 17.31 L3.23 16.11 L2.01 16.58 L1.24 14.69 L2.31 13.84 L2.02 12.36 L0.74 12.15 L0.74 10.05 L2.02 9.84 L2.31 8.36 L1.24 7.51 L2.01 5.62 L3.23 6.09 L4.04 4.89 L3.38 3.59 L4.77 2.28 L5.71 3.32 L6.87 2.66 L6.76 1.15 L8.50 0.68 L8.95 2.10 L10.25 2.10 L10.70 0.68 L12.44 1.15 L12.33 2.66 L13.49 3.32 L14.43 2.28 L15.82 3.59 L15.16 4.89 L15.97 6.09 L17.19 5.62 L17.96 7.51 L16.89 8.36 L17.18 9.84 Z" fill="url(#gg)"/><ellipse cx="9.1" cy="10.8" rx="3.4" ry="4.9" fill="#d0dff2"/><circle cx="16" cy="15.5" r="5" fill="#3fa81e" stroke="#dfeed8" stroke-width="0.7"/><path d="M16 12.4 V17.4 M13.5 15.4 L16 18.1 L18.5 15.4" fill="none" stroke="#fff" stroke-width="1.4"/></svg>
<span class="x mb" style="left:539.79px;top:70px;color:#22427f;">Setting</span>
</body></html>
